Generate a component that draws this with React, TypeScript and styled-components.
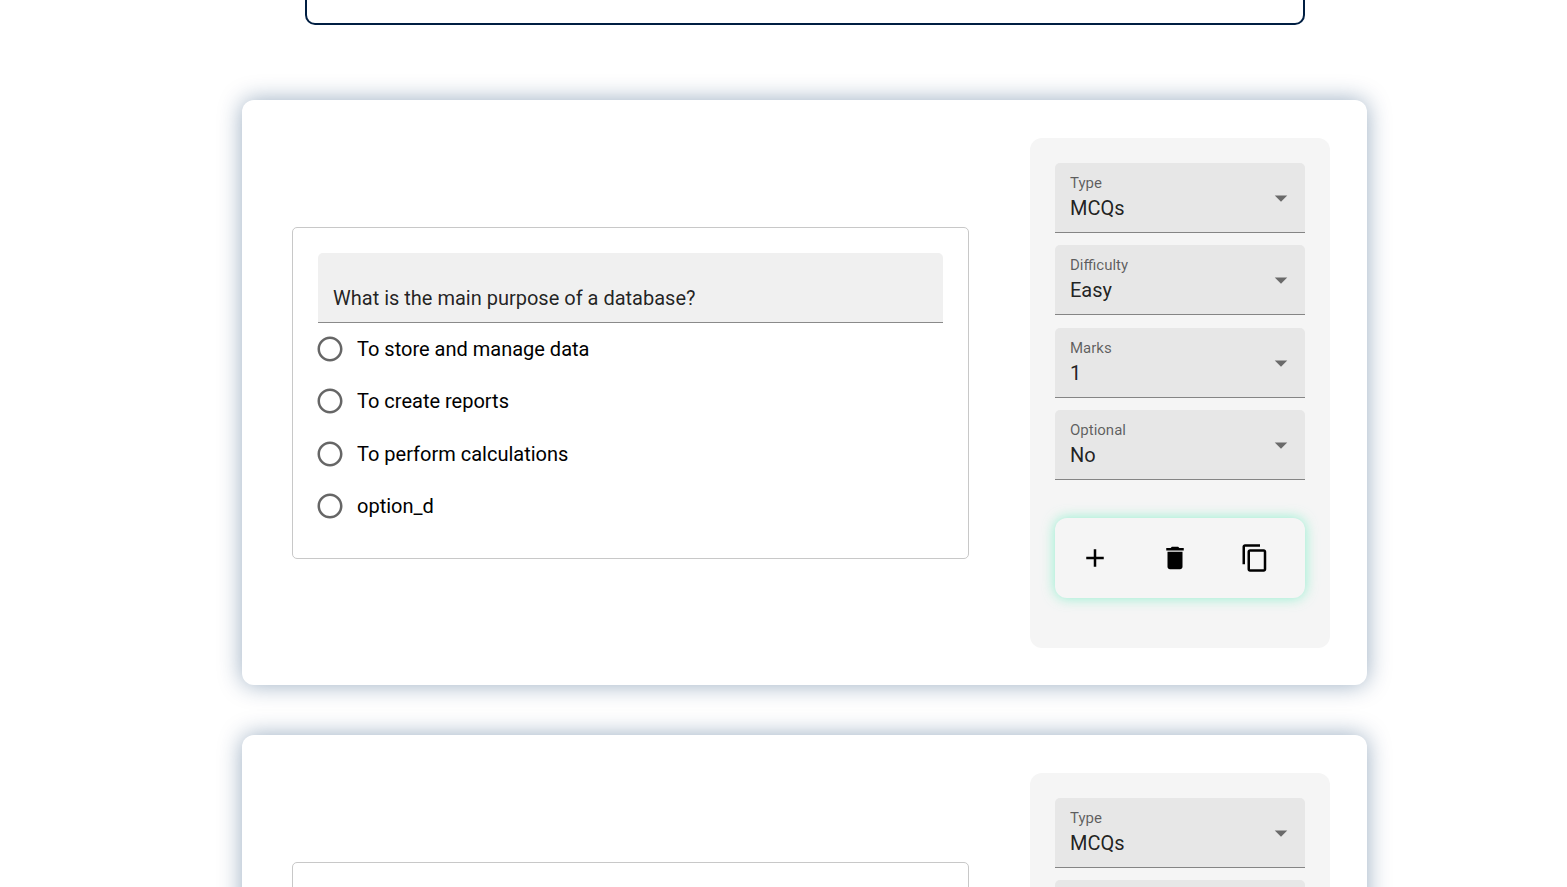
import React, { useId } from 'react';
import styled, { createGlobalStyle } from 'styled-components';
import { MdAdd, MdArrowDropDown, MdContentCopy, MdDelete, MdRadioButtonUnchecked } from 'react-icons/md';

const GlobalStyle = createGlobalStyle`
  *, *::before, *::after { box-sizing: border-box; }
  body {
    margin: 0;
    background: #fff;
    color: #000;
    font-family: Roboto, 'Liberation Sans', sans-serif;
    font-size: 20px;
  }
  input, select, button { font: inherit; color: inherit; }
`;

const Page = styled.main`
  display: flex;
  flex-direction: column;
  align-items: center;
  gap: 50px;
  height: 100vh;
  padding: 0 0 50px 42px;
  overflow-y: auto;
  scrollbar-width: none;
`;

const FormHeader = styled.header`
  flex: none;
  width: 100%;
  max-width: 1000px;
  height: 25px;
  margin-bottom: 25px;
  border: 2px solid #001e42;
  border-top: none;
  border-radius: 0 0 10px 10px;
`;

const Card = styled.section`
  flex: none;
  display: grid;
  grid-template-columns: minmax(0, 1fr) 300px;
  align-items: center;
  gap: 61px;
  width: 100%;
  max-width: 1125px;
  padding: 38px 37px 37px 50px;
  border-radius: 12px;
  background: #fff;
  box-shadow: 0 0 23px rgba(0, 50, 100, 0.4);
`;

const QuestionBox = styled.form`
  padding: 25px 25px 26px;
  border: 1px solid #c8c8c8;
  border-radius: 5px;
`;

const QuestionInput = styled.input`
  display: block;
  width: 100%;
  height: 70px;
  padding: 31px 15px 10px;
  border: 0;
  border-bottom: 1px solid #8a8a8a;
  border-radius: 5px 5px 0 0;
  background: #f0f0f0;
  color: rgba(0, 0, 0, 0.87);
  outline: none;
`;

const Options = styled.div`
  display: grid;
  grid-auto-rows: 1fr;
  height: 209px;
`;

const Option = styled.label`
  display: flex;
  align-items: center;
  gap: 12px;
  margin-left: -3px;
  cursor: pointer;
`;

const RadioMark = styled.span`
  display: grid;
  width: 30px;
  height: 30px;
  color: rgba(0, 0, 0, 0.6);

  > * {
    grid-area: 1 / 1;
    width: 30px;
    height: 30px;
    margin: 0;
  }
  input { opacity: 0; cursor: pointer; }
  input:checked + svg { color: #1976d2; }
`;

const SidePanel = styled.aside`
  padding: 25px 25px 50px;
  border-radius: 12px;
  background: #f5f5f5;
`;

const Settings = styled.div`
  display: flex;
  flex-direction: column;
  justify-content: space-between;
  height: 317px;
  margin-bottom: 38px;
`;

const Field = styled.div`
  position: relative;
  height: 70px;
  border-bottom: 1px solid #858585;
  border-radius: 5px 5px 0 0;
  background: #e7e7e7;

  svg {
    position: absolute;
    top: 20px;
    right: 9px;
    width: 30px;
    height: 30px;
    color: rgba(0, 0, 0, 0.54);
    pointer-events: none;
  }
`;

const FieldLabel = styled.label`
  position: absolute;
  top: 10px;
  left: 15px;
  font-size: 15px;
  line-height: 21px;
  color: rgba(0, 0, 0, 0.6);
  pointer-events: none;
`;

const FieldSelect = styled.select`
  display: block;
  width: 100%;
  height: 69px;
  padding: 31px 40px 10px 15px;
  border: 0;
  background: transparent;
  color: rgba(0, 0, 0, 0.87);
  appearance: none;
  outline: none;
  cursor: pointer;
`;

const Toolbar = styled.div`
  display: flex;
  gap: 30px;
  padding: 15px;
  border-radius: 12px;
  background: #f5f5f5;
  box-shadow: 0 0 13px rgba(100, 236, 190, 0.7);
`;

const IconButton = styled.button`
  display: grid;
  place-items: center;
  width: 50px;
  height: 50px;
  padding: 0;
  border: 0;
  border-radius: 50%;
  background: transparent;
  color: #000;
  cursor: pointer;

  svg { width: 30px; height: 30px; }
`;

interface Question {
  text: string;
  options: string[];
}

const questions: Question[] = [
  {
    text: 'What is the main purpose of a database?',
    options: ['To store and manage data', 'To create reports', 'To perform calculations', 'option_d'],
  },
  {
    text: 'What is the main purpose of a database?',
    options: ['To store and manage data', 'To create reports', 'To perform calculations', 'option_d'],
  },
];

const settings = [
  { label: 'Type', value: 'MCQs' },
  { label: 'Difficulty', value: 'Easy' },
  { label: 'Marks', value: '1' },
  { label: 'Optional', value: 'No' },
];

function SelectField({ label, value }: { label: string; value: string }) {
  const id = useId();
  return (
    <Field>
      <FieldLabel htmlFor={id}>{label}</FieldLabel>
      <FieldSelect id={id} defaultValue={value}>
        <option value={value}>{value}</option>
      </FieldSelect>
      <MdArrowDropDown aria-hidden />
    </Field>
  );
}

function QuestionCard({ question }: { question: Question }) {
  const group = useId();
  return (
    <Card>
      <QuestionBox>
        <QuestionInput aria-label="Question" defaultValue={question.text} />
        <Options role="radiogroup" aria-label="Answers">
          {question.options.map((option) => (
            <Option key={option}>
              <RadioMark>
                <input type="radio" name={group} value={option} />
                <MdRadioButtonUnchecked aria-hidden />
              </RadioMark>
              {option}
            </Option>
          ))}
        </Options>
      </QuestionBox>
      <SidePanel>
        <Settings>
          {settings.map((s) => (
            <SelectField key={s.label} label={s.label} value={s.value} />
          ))}
        </Settings>
        <Toolbar role="toolbar" aria-label="Question actions">
          <IconButton type="button" aria-label="Add question"><MdAdd /></IconButton>
          <IconButton type="button" aria-label="Delete question"><MdDelete /></IconButton>
          <IconButton type="button" aria-label="Duplicate question"><MdContentCopy /></IconButton>
        </Toolbar>
      </SidePanel>
    </Card>
  );
}

export default function App() {
  return (
    <>
      <GlobalStyle />
      <Page>
        <FormHeader />
        {questions.map((question, index) => (
          <QuestionCard key={index} question={question} />
        ))}
      </Page>
    </>
  );
}
